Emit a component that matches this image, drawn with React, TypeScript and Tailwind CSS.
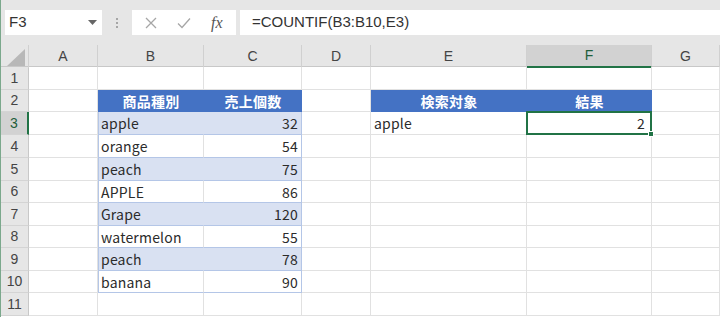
const cols = ['A', 'B', 'C', 'D', 'E', 'F', 'G'];
const gridCols = 'grid grid-cols-[28px_69px_106px_98px_69px_156px_125px_1fr]';
const heights = ['h-[23px]', 'h-[22px]', 'h-[23px]', 'h-[23px]', 'h-[23px]', 'h-[22px]', 'h-[23px]', 'h-[22px]', 'h-[23px]', 'h-[22px]', 'h-[23px]'];

const items: [string, number][] = [
  ['apple', 32],
  ['orange', 54],
  ['peach', 75],
  ['APPLE', 86],
  ['Grape', 120],
  ['watermelon', 55],
  ['peach', 78],
  ['banana', 90],
];

const gridLine = 'border-r border-b border-[#e1e1e1]';

function Cell({ row, col }: { row: number; col: number }) {
  // row is 1-based sheet row, col is 0-based (A=0)
  const base = 'relative flex items-center px-[3px] text-[14px] text-[#2b2b2b] leading-none tracking-[0.2px]';

  // table headers B2:C2 and E2:F2
  if (row === 2 && (col === 1 || col === 2 || col === 4 || col === 5)) {
    const label = { 1: '商品種別', 2: '売上個数', 4: '検索対象', 5: '結果' }[col];
    return (
      <div className={`${base} justify-center bg-[#4472c4] text-white font-bold border-b border-[#4472c4]`}>
        {label}
      </div>
    );
  }

  // data table B3:C10
  if (row >= 3 && row <= 10 && (col === 1 || col === 2)) {
    const [name, qty] = items[row - 3];
    const banded = row % 2 === 1;
    const fill = banded ? 'bg-[#d9e1f2]' : 'bg-white';
    if (col === 1) {
      return (
        <div className={`${base} ${fill} border-b border-[#b4c6e7] border-r ${banded ? 'border-r-[#d9e1f2]' : 'border-r-[#e1e1e1]'} shadow-[inset_1px_0_0_#b4c6e7]`}>
          {name}
        </div>
      );
    }
    return (
      <div className={`${base} ${fill} justify-end border-b border-r border-[#b4c6e7]`}>
        {qty}
      </div>
    );
  }

  if (row === 3 && col === 4) {
    return <div className={`${base} ${gridLine}`}>apple</div>;
  }

  if (row === 3 && col === 5) {
    return (
      <div className={`${base} ${gridLine} justify-end pr-[6px]`}>
        2
        <div className="absolute z-10 -left-px -top-px -right-px -bottom-px border-2 border-[#217346]" />
        <div className="absolute z-20 -right-[3px] -bottom-[3px] w-[6px] h-[6px] bg-[#217346] border border-white" />
      </div>
    );
  }

  return <div className={`${base} ${gridLine}`} />;
}

export default function App() {
  return (
    <div className="w-[720px] h-[317px] overflow-hidden bg-white border-l border-[#7ba88c] font-['Noto_Sans_CJK_JP','Noto_Sans',sans-serif]">
      {/* formula bar */}
      <div className="h-[45px] bg-[#e6e6e6] flex items-center pl-[4px]">
        <div className="w-[97px] h-[25px] bg-white flex items-center justify-between pl-[4px] pr-[4px] text-[15px] text-[#333]">
          <span className="font-['Liberation_Sans',sans-serif]">F3</span>
          <svg width="9" height="5" viewBox="0 0 9 5" className="mr-[1px]">
            <path d="M0 0 L9 0 L4.5 5 Z" fill="#666" />
          </svg>
        </div>
        <div className="w-[30px] flex flex-col items-center gap-[2px]">
          <div className="w-[2px] h-[2px] bg-[#a6a6a6]" />
          <div className="w-[2px] h-[2px] bg-[#a6a6a6]" />
          <div className="w-[2px] h-[2px] bg-[#a6a6a6]" />
        </div>
        <div className="w-[104px] h-[25px] bg-white flex items-center">
          <svg width="12" height="12" viewBox="0 0 12 12" className="ml-[13px]">
            <path d="M1 1 L11 11 M11 1 L1 11" stroke="#a6a6a6" strokeWidth="1.3" fill="none" />
          </svg>
          <svg width="14" height="12" viewBox="0 0 14 12" className="ml-[20px]">
            <path d="M1 6.5 L5 10.5 L13 1.5" stroke="#a6a6a6" strokeWidth="1.3" fill="none" />
          </svg>
          <span className="ml-[20px] italic text-[16px] text-[#555] font-['Liberation_Serif',serif]">fx</span>
        </div>
        <div className="ml-[4px] flex-1 h-[25px] bg-white flex items-center pl-[12px] text-[15px] text-[#333] font-['Liberation_Sans',sans-serif]">
          =COUNTIF(B3:B10,E3)
        </div>
      </div>

      {/* column headers */}
      <div className={`${gridCols} h-[22px] bg-[#e6e6e6] border-b border-[#c8c8c8]`}>
        <div className="relative border-r border-[#d0d0d0]">
          <svg width="18" height="17" viewBox="0 0 18 17" className="absolute right-[3px] bottom-[2px]">
            <path d="M18 0 L18 17 L0 17 Z" fill="#b8b8b8" />
          </svg>
        </div>
        {cols.map((c) => (
          <div
            key={c}
            className={`flex items-center justify-center text-[14px] border-r border-[#d0d0d0] font-['Liberation_Sans',sans-serif] ${
              c === 'F' ? 'bg-[#d2d2d2] text-[#1e5e3a] border-b-2 border-b-[#217346]' : 'text-[#444]'
            }`}
          >
            {c}
          </div>
        ))}
      </div>

      {/* rows */}
      {heights.map((h, i) => {
        const row = i + 1;
        return (
          <div key={row} className={`${gridCols} ${h}`}>
            <div
              className={`flex items-center justify-center text-[14px] border-b border-[#d4d4d4] font-['Liberation_Sans',sans-serif] ${
                row === 3
                  ? 'bg-[#d2d2d2] text-[#1e5e3a] border-r-2 border-r-[#217346]'
                  : 'bg-[#e6e6e6] text-[#444] border-r border-r-[#c8c8c8]'
              }`}
            >
              {row}
            </div>
            {cols.map((c, ci) => (
              <Cell key={c} row={row} col={ci} />
            ))}
          </div>
        );
      })}
    </div>
  );
}
